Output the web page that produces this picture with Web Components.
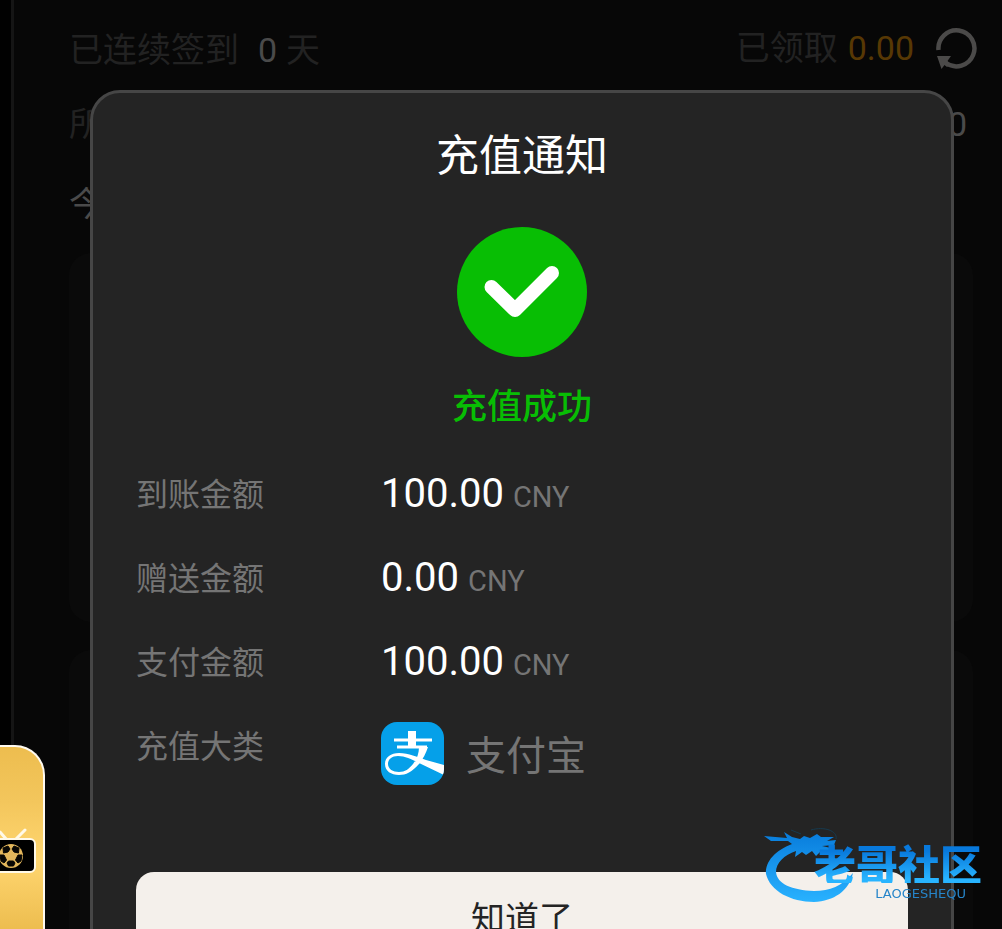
<!DOCTYPE html>
<html lang="zh-CN">
<head>
<meta charset="utf-8">
<meta name="viewport" content="width=device-width, initial-scale=1">
<title>充值通知</title>
<style>
  html, body { margin: 0; height: 100%; }
  body { background: #010101; overflow: hidden; font-family: Roboto, "Noto Sans CJK SC", sans-serif; }
</style>
</head>
<body>
<sign-in-page></sign-in-page>
<side-tab></side-tab>
<modal-layer>
  <notice-dialog heading="充值通知" status="充值成功" action="知道了">
    <detail-row label="到账金额"><money-value amount="100.00" currency="CNY"></money-value></detail-row>
    <detail-row label="赠送金额"><money-value amount="0.00" currency="CNY"></money-value></detail-row>
    <detail-row label="支付金额"><money-value amount="100.00" currency="CNY"></money-value></detail-row>
    <detail-row label="充值大类"><pay-method>支付宝</pay-method></detail-row>
  </notice-dialog>
</modal-layer>
<site-mark></site-mark>

<script>
const define = (name, render) => customElements.define(name, class extends HTMLElement {
  constructor() {
    super();
    this.attachShadow({ mode: 'open' });
  }
  connectedCallback() {
    this.shadowRoot.innerHTML = render(this);
  }
});

/* Check-in page behind the dialog */
define('sign-in-page', () => `
<style>
  :host { display: flex; flex-direction: column; box-sizing: border-box; height: 100vh; margin-left: 11px; padding: 0 29px 0 55px;
    border-left: 3px solid #151515; background: #070707; overflow: hidden; color: #222; font-size: 34px; line-height: 48px; }
  .row { display: flex; justify-content: space-between; align-items: center; height: 76px; flex: none; }
  .row.first { height: 86px; padding-top: 10px; box-sizing: border-box; margin-right: -5px; }
  .row.last { height: 84px; color: #4a4a4a; }
  .right { display: flex; align-items: center; gap: 10px; }
  .days { display: flex; gap: 9px; padding-top: 4px; }
  .days b { font-weight: 400; color: #4a4a4a; margin-left: 10px; }
  .gold { color: #573804; }
  .num { color: #4a4a4a; margin-right: 6px; }
  button { all: unset; display: block; width: 42px; height: 42px; margin: 2px 0 0 12px; }
  svg { display: block; }
  .card { flex: none; height: 369px; margin-bottom: 28px; border-radius: 22px; background: #0a0a0a; }
  .card.top { margin-top: 7px; }
</style>
<div class="row first">
  <div class="days"><span>已连续签到</span><b>0</b><span>天</span></div>
  <div class="right"><span>已领取</span><span class="gold">0.00</span>
    <button aria-label="刷新"><svg width="42" height="42" viewBox="0 0 42 42">
      <path d="M2.500 22A18 18 0 1 1 10 35" fill="none" stroke="#4b4a49" stroke-width="4.500"/>
      <path d="M1 28H15L11.500 33L14 36L11 39L8.500 37L5.500 41Z" fill="#4b4a49"/></svg></button>
  </div>
</div>
<div class="row"><span>所</span><span class="num">0</span></div>
<div class="row last"><span>今</span></div>
<div class="card top"></div>
<div class="card"></div>`);

/* Golden tab with the sports TV badge, docked at the left edge */
define('side-tab', () => `
<style>
  :host { position: fixed; left: 0; bottom: 0; display: flex; align-items: center; box-sizing: border-box; width: 45px; height: 184px;
    border: solid #fffaf0; border-width: 2px 2px 0 0; border-radius: 0 30px 0 0;
    background: linear-gradient(#edbd4f, #f3c65c 30%, #ffd670 62%, #edbd4f); }
  svg { display: block; margin-top: 28px; }
</style>
<svg width="38" height="50" viewBox="0 0 38 50">
  <path d="M0 5L7 13M15 13L25 3" stroke="#fff9e8" stroke-width="3" stroke-linecap="round"/>
  <rect x="-10" y="12" width="45" height="33" rx="5" fill="#000" stroke="#fff9e8" stroke-width="2"/>
  <circle cx="11" cy="29" r="12" fill="#e3b75c"/>
  <path d="M3 21L8 19L10 22L8 25L3.500 26ZM19 21L14 19L12 22L14 25L18.500 26ZM0 28L4 28L6.500 33L4 36L1 34ZM22 28L18 28L15.500 33L18 36L21 34ZM7 36L8.500 34H13.500L15 36L13.500 39H8.500Z" fill="#080704" stroke="#080704" stroke-width="1" stroke-linejoin="round"/>
</svg>`);

define('modal-layer', () => `
<style>
  :host { position: fixed; inset: 0; display: block; box-sizing: border-box; padding: 90px 48px 0 90px; overflow: hidden; }
</style><slot></slot>`);

define('notice-dialog', el => `
<style>
  :host { display: block; box-sizing: border-box; border: 3px solid #464646; border-radius: 30px; background: #242424; padding: 31px 43px 43px; }
  section { display: flex; flex-direction: column; align-items: center; }
  h1 { margin: 0; color: #fff; font-size: 43px; line-height: 64px; font-weight: 400; }
  svg { display: block; margin-top: 39px; }
  .status { margin: 26px 0 20px; color: #08be04; font-size: 35px; line-height: 50px; font-weight: 500; }
  .list { align-self: stretch; }
  button { align-self: stretch; margin: 83px 0 0; border: 0; border-radius: 18px; height: 94px; padding: 0;
    background: #f4f0eb; color: #242424; font: 400 34px/50px Roboto, "Noto Sans CJK SC", sans-serif; }
</style>
<section role="dialog" aria-labelledby="t">
  <h1 id="t">${el.getAttribute('heading')}</h1>
  <svg width="130" height="130" viewBox="0 0 130 130" aria-hidden="true">
    <circle cx="65" cy="65" r="65" fill="#08be04"/>
    <path d="M34.500 60L58 83L95 46" fill="none" stroke="#fff" stroke-width="14" stroke-linecap="round" stroke-linejoin="round"/>
  </svg>
  <p class="status">${el.getAttribute('status')}</p>
  <div class="list"><slot></slot></div>
  <button type="button">${el.getAttribute('action')}</button>
</section>`);

define('detail-row', el => `
<style>
  :host { display: grid; grid-template-columns: 245px 1fr; align-items: center; height: 84px; color: #757575; }
  span { font-size: 32px; line-height: 46px; }
</style>
<span>${el.getAttribute('label')}</span><slot></slot>`);

define('money-value', el => `
<style>
  :host { display: flex; align-items: baseline; gap: 9px; font-size: 29px; line-height: 48px; }
  b { font-size: 40px; font-weight: 400; color: #fff; }
</style>
<b>${el.getAttribute('amount')}</b><span>${el.getAttribute('currency')}</span>`);

define('pay-method', () => `
<style>
  :host { display: flex; align-items: center; gap: 22px; padding-top: 12px; font-size: 40px; line-height: 58px; }
  svg { display: block; border-radius: 16px; }
  span { padding-top: 8px; }
</style>
<svg width="63" height="63" viewBox="0 0 63 63" aria-hidden="true">
  <rect width="63" height="63" fill="#05a0e9"/>
  <path d="M13 18H51M16 25H46" stroke="#fff" stroke-width="3"/>
  <path d="M27 9H35V26H27Z" fill="#fff"/>
  <path d="M38 25H47C45 31 42 37 38 42C31 50 25 53 18 53C10 53 4 49 4 42C4 35 10 31 18 31C28 31 36 35 45 38L63 43V53L38 41C30 37 24 34 17 34C11 34 7 37 7 42C7 47 12 50 18 50C24 50 28 47 32 42C36 37 38 31 38 25Z" fill="#fff"/>
</svg><span><slot></slot></span>`);

/* Community mark laid over the lower right corner */
define('site-mark', () => `
<style>
  :host { position: fixed; right: 16px; bottom: 24px; display: grid; width: 222px; height: 78px; pointer-events: none; }
  svg, .words { grid-area: 1 / 1; }
  .words { display: flex; flex-direction: column; align-items: flex-end; padding-top: 16px; }
  b { font: 900 42px/40px "Noto Sans CJK SC", sans-serif; margin-right: 4px; background: linear-gradient(#0879dc 20%, #28b4ff 90%); -webkit-background-clip: text; background-clip: text; color: transparent; }
  small { font: 13px/22px "DejaVu Sans", sans-serif; color: #2685c9; margin-right: 20px; }
</style>
<svg width="222" height="78" viewBox="0 0 222 78" aria-hidden="true">
  <defs><linearGradient id="g" x1="0" y1="0" x2="0" y2="1"><stop offset="0" stop-color="#087cdc"/><stop offset="1" stop-color="#29b2ff"/></linearGradient></defs>
  <path d="M28 17C12 23 1 34 2 47C6 64 27 75 50 75C70 74 85 64 89 46C78 59 66 64 50 64C28 63 13 57 12 45C12 36 20 28 32 24L31 30L38 25L42 28L48 24L52 29L57 24L70 24L67 21L58 19L70 18L72 13L63 14L70 10L57 10L53 7L46 11L40 9L36 12L28 10L20 5L23 11L0 9L7 14L24 14Z" fill="url(#g)"/>
  <path d="M27 3L37 7M47 3C60 -1 74 4 72 12" fill="none" stroke="#173b50" stroke-width="1"/>
</svg>
<div class="words"><b>老哥社区</b><small>LAOGESHEQU</small></div>`);
</script>
</body>
</html>
